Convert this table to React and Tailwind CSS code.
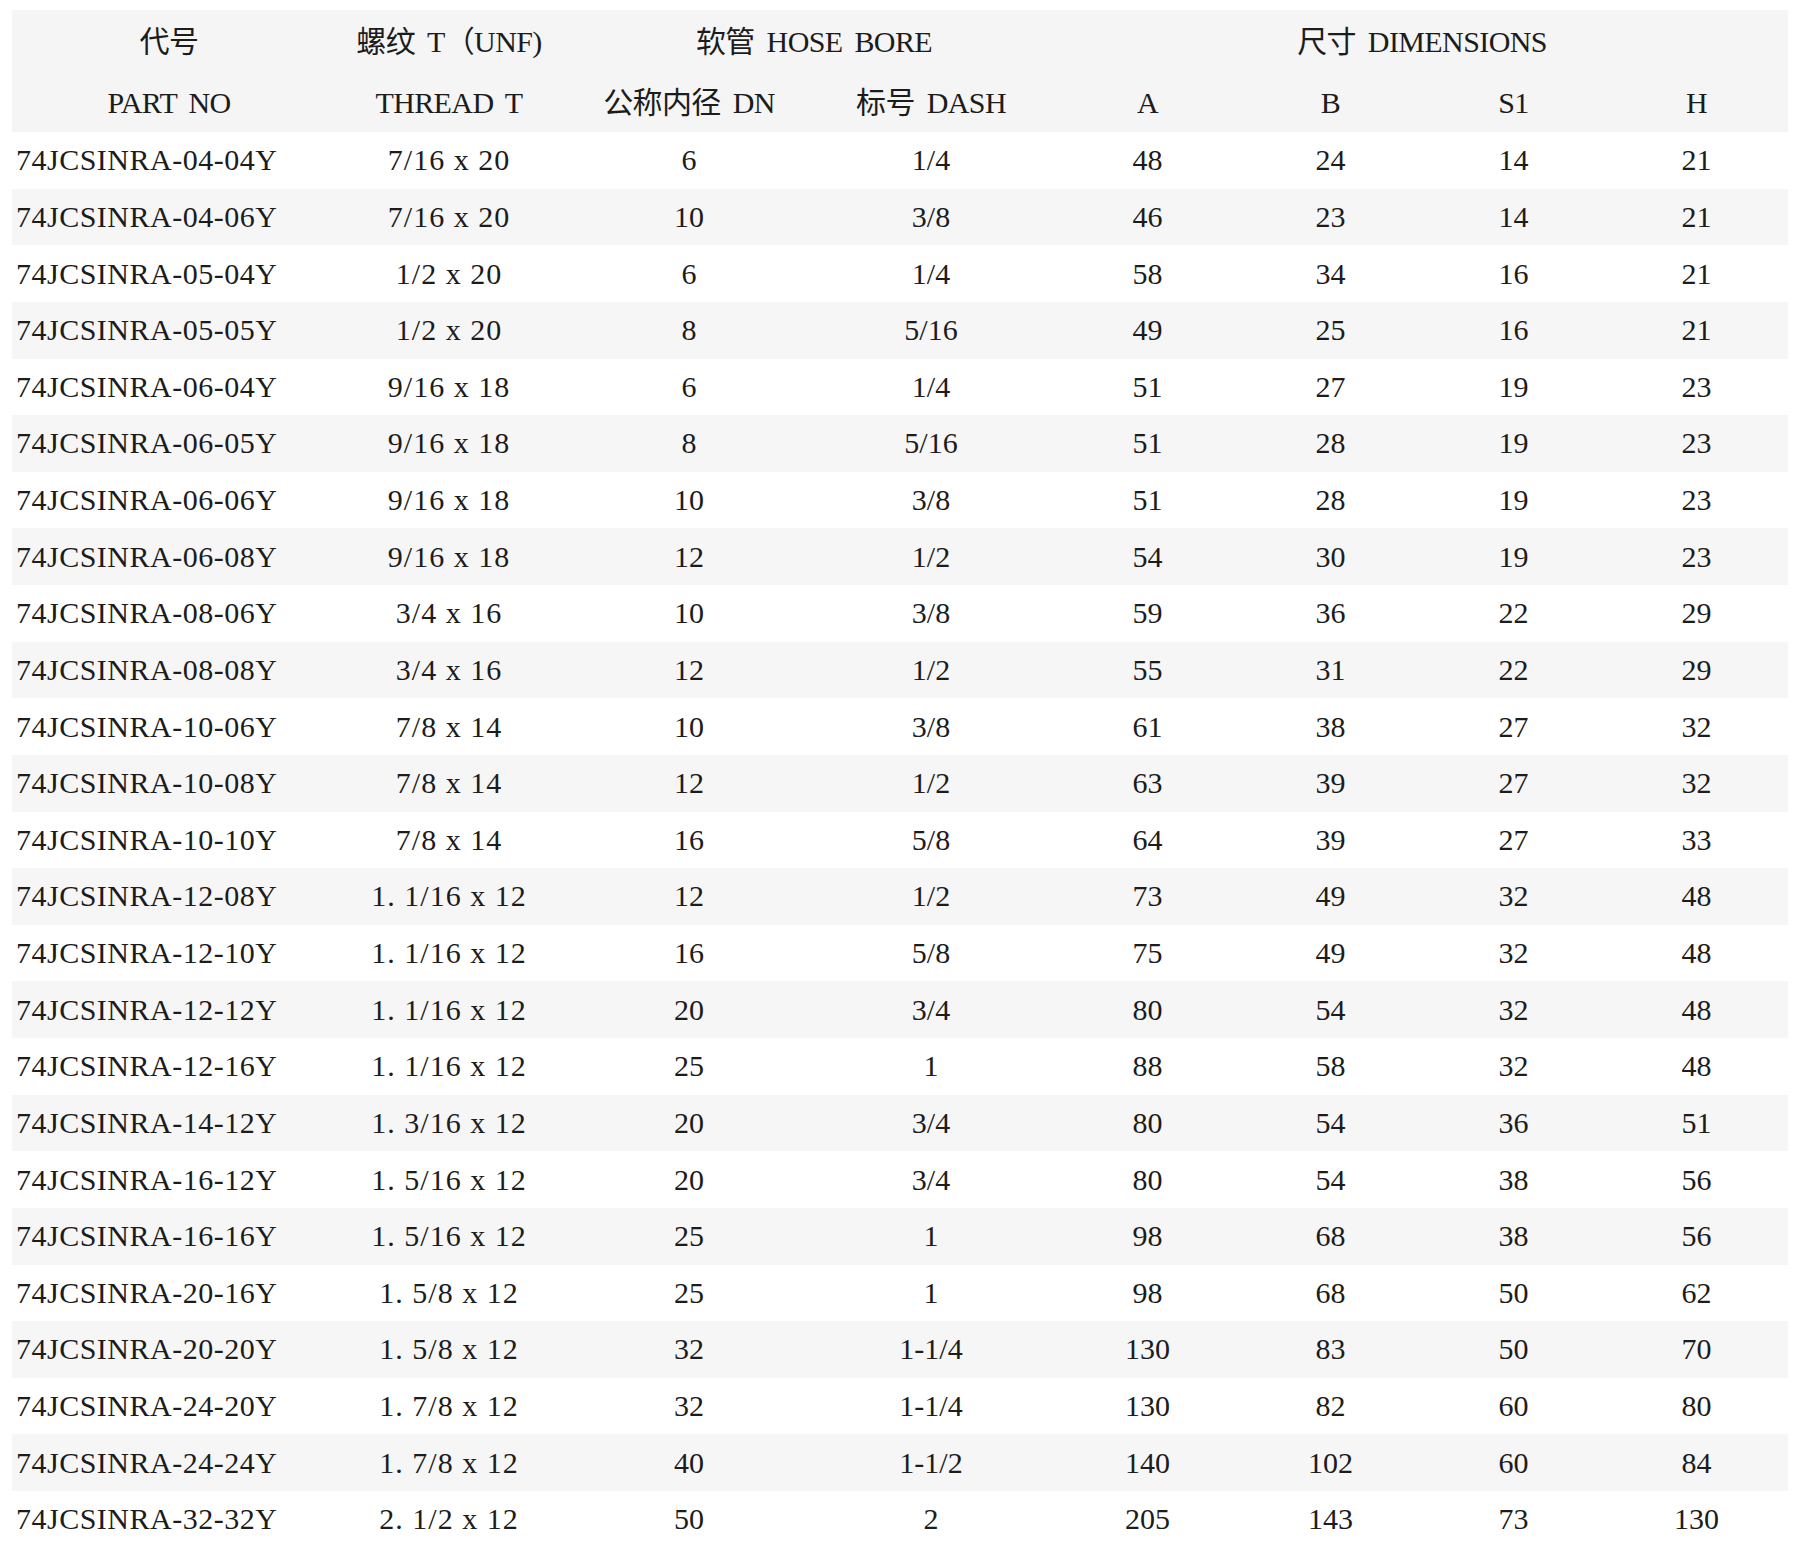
import React from 'react';

const COLS = 'grid grid-cols-[314px_246px_234px_250px_183px_183px_183px_183px]';

const rows = [
  ['74JCSINRA-04-04Y', '7/16 x 20', '6', '1/4', '48', '24', '14', '21'],
  ['74JCSINRA-04-06Y', '7/16 x 20', '10', '3/8', '46', '23', '14', '21'],
  ['74JCSINRA-05-04Y', '1/2 x 20', '6', '1/4', '58', '34', '16', '21'],
  ['74JCSINRA-05-05Y', '1/2 x 20', '8', '5/16', '49', '25', '16', '21'],
  ['74JCSINRA-06-04Y', '9/16 x 18', '6', '1/4', '51', '27', '19', '23'],
  ['74JCSINRA-06-05Y', '9/16 x 18', '8', '5/16', '51', '28', '19', '23'],
  ['74JCSINRA-06-06Y', '9/16 x 18', '10', '3/8', '51', '28', '19', '23'],
  ['74JCSINRA-06-08Y', '9/16 x 18', '12', '1/2', '54', '30', '19', '23'],
  ['74JCSINRA-08-06Y', '3/4 x 16', '10', '3/8', '59', '36', '22', '29'],
  ['74JCSINRA-08-08Y', '3/4 x 16', '12', '1/2', '55', '31', '22', '29'],
  ['74JCSINRA-10-06Y', '7/8 x 14', '10', '3/8', '61', '38', '27', '32'],
  ['74JCSINRA-10-08Y', '7/8 x 14', '12', '1/2', '63', '39', '27', '32'],
  ['74JCSINRA-10-10Y', '7/8 x 14', '16', '5/8', '64', '39', '27', '33'],
  ['74JCSINRA-12-08Y', '1. 1/16 x 12', '12', '1/2', '73', '49', '32', '48'],
  ['74JCSINRA-12-10Y', '1. 1/16 x 12', '16', '5/8', '75', '49', '32', '48'],
  ['74JCSINRA-12-12Y', '1. 1/16 x 12', '20', '3/4', '80', '54', '32', '48'],
  ['74JCSINRA-12-16Y', '1. 1/16 x 12', '25', '1', '88', '58', '32', '48'],
  ['74JCSINRA-14-12Y', '1. 3/16 x 12', '20', '3/4', '80', '54', '36', '51'],
  ['74JCSINRA-16-12Y', '1. 5/16 x 12', '20', '3/4', '80', '54', '38', '56'],
  ['74JCSINRA-16-16Y', '1. 5/16 x 12', '25', '1', '98', '68', '38', '56'],
  ['74JCSINRA-20-16Y', '1. 5/8 x 12', '25', '1', '98', '68', '50', '62'],
  ['74JCSINRA-20-20Y', '1. 5/8 x 12', '32', '1-1/4', '130', '83', '50', '70'],
  ['74JCSINRA-24-20Y', '1. 7/8 x 12', '32', '1-1/4', '130', '82', '60', '80'],
  ['74JCSINRA-24-24Y', '1. 7/8 x 12', '40', '1-1/2', '140', '102', '60', '84'],
  ['74JCSINRA-32-32Y', '2. 1/2 x 12', '50', '2', '205', '143', '73', '130'],
];

function Head({ children, className = '' }) {
  return (
    <div className={`flex items-center justify-center h-[61px] pt-[2px] whitespace-pre tracking-[-0.6px] [word-spacing:5px] ${className}`}>
      {children}
    </div>
  );
}

export default function App() {
  return (
    <div
      className="w-[1800px] h-[1548px] bg-white pt-[10px] px-[12px] text-[#1c1c1c] text-[30px] leading-none overflow-hidden"
      style={{ fontFamily: '"Liberation Serif", "Noto Sans CJK SC", serif' }}
    >
      {/* header */}
      <div className={`${COLS} bg-[#f5f5f5]`}>
        <Head>代号</Head>
        <Head>螺纹 T（UNF)</Head>
        <Head className="col-span-2">软管 HOSE BORE</Head>
        <Head className="col-span-4">尺寸 DIMENSIONS</Head>
        <Head>PART NO</Head>
        <Head>THREAD T</Head>
        <Head>公称内径 DN</Head>
        <Head>标号 DASH</Head>
        <Head>A</Head>
        <Head>B</Head>
        <Head>S1</Head>
        <Head>H</Head>
      </div>

      {/* body */}
      {rows.map((r, i) => (
        <div key={r[0]} className={`${COLS} h-[56.64px] ${i % 2 === 1 ? 'bg-[#f6f6f6]' : 'bg-white'}`}>
          {r.map((c, j) => (
            <div
              key={j}
              className={`flex items-center whitespace-pre ${
                j === 0 ? 'pl-[4px] justify-start tracking-[0.5px]' : j === 1 ? 'justify-center tracking-[1px]' : 'justify-center'
              }`}
            >
              {c}
            </div>
          ))}
        </div>
      ))}
    </div>
  );
}
